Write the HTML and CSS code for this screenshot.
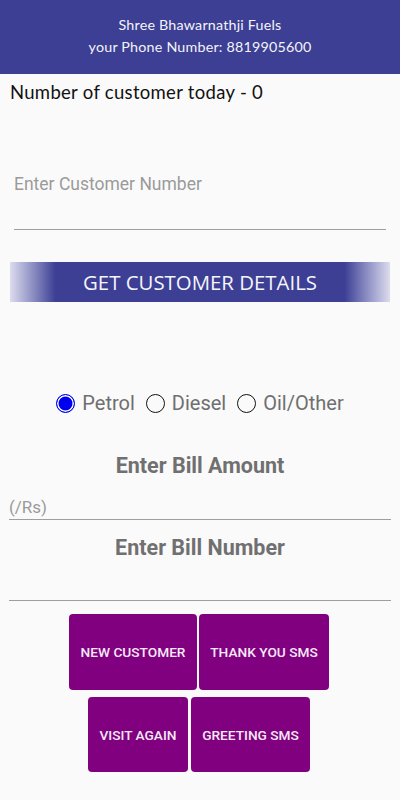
FILE: index.html
```html
<!DOCTYPE html>
<html lang="en">

    <head>
        <meta charset="UTF-8">
        <meta name="viewport" content="width=device-width, initial-scale=1.0">
        <title>Shree Bhawarnathji Fuels</title>
        <link rel="stylesheet" href="styles.css">
    </head>

    <body>
        <header class="top_bar">
            <div class="shop_name">Shree Bhawarnathji Fuels</div>
            <div class="shop_phone">your Phone Number: 8819905600</div>
        </header>

        <div class="customer_count">Number of customer today - 0</div>

        <div class="customer_field">
            <input type="text" class="line_input" placeholder="Enter Customer Number">
        </div>

        <button class="details_btn">GET CUSTOMER DETAILS</button>

        <div class="fuel_group">
            <label class="fuel_option"><input type="radio" name="fuel" checked><span class="dot"></span>Petrol</label>
            <label class="fuel_option"><input type="radio" name="fuel"><span class="dot"></span>Diesel</label>
            <label class="fuel_option"><input type="radio" name="fuel"><span class="dot"></span>Oil/Other</label>
        </div>

        <h2 class="field_title">Enter Bill Amount</h2>
        <input type="text" class="line_input bill_amount" placeholder="(/Rs)">

        <h2 class="field_title">Enter Bill Number</h2>
        <input type="text" class="line_input bill_number">

        <div class="action_row">
            <button class="action_btn wide">NEW CUSTOMER</button>
            <button class="action_btn wide2">THANK YOU SMS</button>
        </div>
        <div class="action_row second">
            <button class="action_btn narrow">VISIT AGAIN</button>
            <button class="action_btn narrow2">GREETING SMS</button>
        </div>
    </body>

</html>
```

FILE: styles.css
```css
body {
    font-family: Roboto, "Noto Sans", sans-serif;
    margin: 0;
    padding: 0;
    background-color: #fafafa;
    width: 400px;
}

.top_bar {
    background-color: #3c3f94;
    color: #f4f4f8;
    height: 74px;
    box-sizing: border-box;
    padding-top: 14px;
    text-align: center;
    font-family: Lato, sans-serif;
    font-size: 14.3px;
    line-height: 22px;
    letter-spacing: 0.2px;
}

.customer_count {
    font-family: Lato, sans-serif;
    font-size: 18.5px;
    line-height: 26px;
    color: #111;
    padding: 5px 0 0 10px;
    height: 27px;
    letter-spacing: 0.3px;
}

.customer_field {
    padding: 66px 14px 0 14px;
}

.line_input {
    display: block;
    width: 100%;
    box-sizing: border-box;
    border: none;
    border-bottom: 1.5px solid #9e9e9e;
    background: transparent;
    font-family: Roboto, sans-serif;
    outline: none;
    padding: 0;
}

.customer_field .line_input {
    font-size: 17.5px;
    height: 58px;
    padding: 0 0 34px 0;
}

.line_input::placeholder {
    color: #9a9a9a;
}

.details_btn {
    display: block;
    margin: 32px 10px 0 10px;
    width: 380px;
    height: 40px;
    border: none;
    padding: 0;
    color: #f5f5fa;
    font-family: "Open Sans", sans-serif;
    font-size: 20.4px;
    background: linear-gradient(to right, #dcdcee 0%, #8d8fc3 6%, #3c3f94 12%, #3c3f94 88%, #8d8fc3 94%, #dcdcee 100%);
}

.fuel_group {
    display: flex;
    justify-content: center;
    align-items: center;
    gap: 11px;
    margin-top: 89px;
    height: 24px;
}

.fuel_option {
    display: flex;
    align-items: center;
    font-size: 20px;
    color: #6f6f6f;
}

.fuel_option input {
    display: none;
}

.dot {
    width: 17px;
    height: 17px;
    border: 1.5px solid #111;
    border-radius: 50%;
    margin-right: 7px;
}

.fuel_option input:checked + .dot {
    border-color: #0000ee;
    background: #0000ee;
    box-shadow: inset 0 0 0 1.5px #fff;
}

.field_title {
    text-align: center;
    font-size: 21.5px;
    line-height: 26px;
    font-weight: bold;
    color: #707070;
    margin: 0;
}

.fuel_group + .field_title {
    margin-top: 38px;
}

.bill_amount {
    margin: 16px 9px 0 9px;
    width: 382px;
    font-size: 17px;
    height: 25px;
}

.bill_amount + .field_title {
    margin-top: 15px;
}

.bill_number {
    margin: 0 9px;
    width: 382px;
    height: 40px;
}

.action_row {
    display: flex;
    justify-content: center;
    gap: 2px;
    margin-top: 13px;
    padding-right: 2px;
}

.action_row.second {
    gap: 3px;
    margin-top: 7px;
}

.action_btn {
    height: 76px;
    border: none;
    border-radius: 4px;
    background-color: #800080;
    color: #f6eaf6;
    font-family: Roboto, sans-serif;
    font-weight: 500;
    font-size: 13.7px;
    padding: 0;
}

.wide {
    width: 128px;
}

.wide2 {
    width: 130px;
}

.narrow {
    width: 100px;
    height: 75px;
}

.narrow2 {
    width: 119px;
    height: 75px;
}
```
